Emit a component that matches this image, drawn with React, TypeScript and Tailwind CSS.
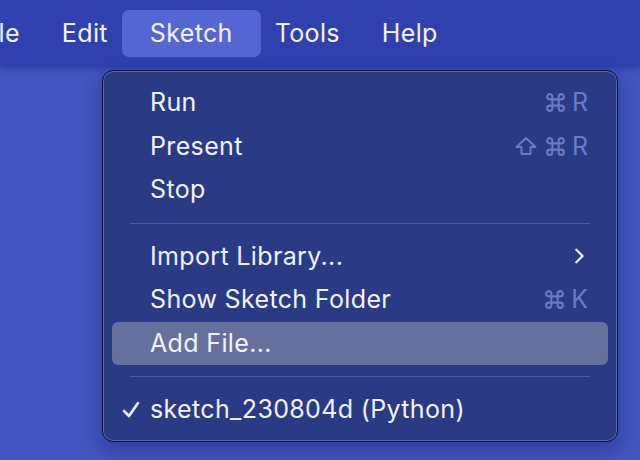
import React from 'react';

const FONT = { fontFamily: 'Inter, "Noto Sans", sans-serif' };

function CmdIcon({ className }: { className?: string }) {
  return (
    <svg viewBox="0 0 20 20" className={className} fill="none" stroke="currentColor" strokeWidth={2}>
      <path d="M7 7H13V13H7Z M7 7V4.5A2.5 2.5 0 1 0 4.5 7H7 M13 7V4.5A2.5 2.5 0 1 1 15.5 7H13 M7 13V15.5A2.5 2.5 0 1 1 4.5 13H7 M13 13V15.5A2.5 2.5 0 1 0 15.5 13H13" />
    </svg>
  );
}

function ShiftIcon({ className }: { className?: string }) {
  return (
    <svg viewBox="0 0 22 20" className={className} fill="none" stroke="currentColor" strokeWidth={2} strokeLinejoin="round">
      <path d="M11 2L20.5 11H15.5V18H6.5V11H1.5Z" />
    </svg>
  );
}

function Shortcut({ shift, keyName }: { shift?: boolean; keyName: string }) {
  return (
    <span className="flex items-center gap-[6px] text-[#6a7ac6]">
      {shift && <ShiftIcon className="w-[22px] h-[20px] mr-[2px]" />}
      <CmdIcon className="w-[21px] h-[21px]" />
      <span className="text-[25px] leading-none">{keyName}</span>
    </span>
  );
}

function Item({
  label,
  right,
  active,
  checked,
}: {
  label: string;
  right?: React.ReactNode;
  active?: boolean;
  checked?: boolean;
}) {
  return (
    <div
      className={`mx-[9px] h-[43.5px] flex items-center pl-[38px] pr-[20px] rounded-[6px] relative ${
        active ? 'bg-[#65719a]' : ''
      }`}
    >
      {checked && (
        <svg
          viewBox="0 0 20 20"
          className="absolute left-[9px] w-[20px] h-[20px] text-[#f1f2fb]"
          fill="none"
          stroke="currentColor"
          strokeWidth={2.6}
          strokeLinecap="round"
          strokeLinejoin="round"
        >
          <path d="M3 11L8 16L17 3" />
        </svg>
      )}
      <span className="flex-1 text-[25px] tracking-[0.35px] text-[#f1f2fb]">{label}</span>
      {right}
    </div>
  );
}

function Separator() {
  return (
    <div className="h-[23px] flex items-center mx-[27px]">
      <div className="h-px w-full bg-[#4d5da3]" />
    </div>
  );
}

export default function App() {
  return (
    <div style={FONT} className="w-[640px] h-[460px] bg-[#4255c1] relative overflow-hidden">
      <div className="h-[67px] bg-[#2e41ae] flex items-center text-[25px] tracking-[0.35px] text-[#f3f4fb] shadow-[0_2px_6px_rgba(20,30,90,0.35)]">
        <span className="ml-[-44px] px-[21px]">File</span>
        <span className="px-[21px]">Edit</span>
        <span className="px-[28px] -mx-[7px] h-[47px] flex items-center rounded-[7px] bg-[#5366d2]">Sketch</span>
        <span className="px-[21px]">Tools</span>
        <span className="px-[21px]">Help</span>
      </div>

      <div className="absolute left-[102px] top-[70px] w-[516px] h-[372px] rounded-[11px] border border-[#12173a] bg-[#2b3a84] shadow-[inset_0_0_0_1px_#5566ad,0_6px_20px_rgba(10,15,50,0.35)] pt-[10px]">
        <Item label="Run" right={<Shortcut keyName="R" />} />
        <Item label="Present" right={<Shortcut shift keyName="R" />} />
        <Item label="Stop" />
        <Separator />
        <Item
          label="Import Library..."
          right={
            <svg viewBox="0 0 20 20" className="w-[18px] h-[18px] text-[#f1f2fb]" fill="none" stroke="currentColor" strokeWidth={2.4} strokeLinecap="round" strokeLinejoin="round">
              <path d="M7 3L14 10L7 17" />
            </svg>
          }
        />
        <Item label="Show Sketch Folder" right={<Shortcut keyName="K" />} />
        <Item label="Add File..." active />
        <Separator />
        <Item label="sketch_230804d (Python)" checked />
      </div>
    </div>
  );
}
